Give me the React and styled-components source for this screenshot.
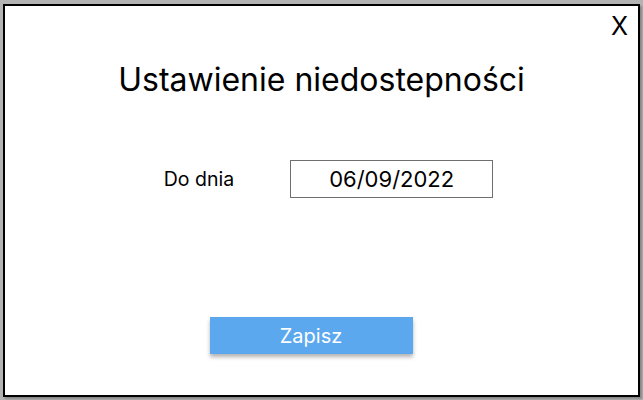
import React, { useState } from 'react';
import styled, { createGlobalStyle } from 'styled-components';

const GlobalStyle = createGlobalStyle`
  html, body {
    margin: 0;
    padding: 0;
    background: #b3b3b3;
    font-family: Inter, "Noto Sans", sans-serif;
  }
`;

const Page = styled.div`
  width: 643px;
  height: 400px;
  padding: 4px 3px 3px 3px;
  box-sizing: border-box;
  display: flex;
`;

const Dialog = styled.div`
  position: relative;
  flex: 1;
  background: #fff;
  border: 2px solid #000;
  box-shadow: 2px 2px 2px rgba(0, 0, 0, 0.25);
  display: flex;
  flex-direction: column;
  align-items: center;
`;

const CloseButton = styled.button`
  position: absolute;
  top: 8px;
  right: 10px;
  border: none;
  background: none;
  padding: 0;
  font-family: Inter, sans-serif;
  font-size: 25px;
  line-height: 1;
  color: #000;
  cursor: pointer;
`;

const Title = styled.h1`
  margin: 55px 0 0;
  font-size: 32px;
  font-weight: 400;
  line-height: 1.2;
  color: #000;
`;

const FieldRow = styled.div`
  display: flex;
  align-items: center;
  gap: 56px;
  margin-top: 61px;
  margin-left: 14px;
`;

const Label = styled.label`
  font-size: 19.5px;
  color: #000;
`;

const DateInput = styled.input`
  width: 203px;
  height: 38px;
  box-sizing: border-box;
  border: 1px solid #6f6f6f;
  border-radius: 0;
  font-family: Inter, sans-serif;
  font-size: 22px;
  text-align: center;
  color: #000;
  outline: none;
`;

const SaveButton = styled.button`
  margin-top: 119px;
  margin-right: 21px;
  width: 203px;
  height: 37px;
  border: none;
  background: #5ba8ef;
  color: #fff;
  font-family: Inter, sans-serif;
  font-size: 20px;
  box-shadow: 0 3px 4px rgba(0, 0, 0, 0.3);
  cursor: pointer;
`;

export default function App() {
  const [date, setDate] = useState('06/09/2022');

  return (
    <>
      <GlobalStyle />
      <Page>
        <Dialog>
          <CloseButton>X</CloseButton>
          <Title>Ustawienie niedostepności</Title>
          <FieldRow>
            <Label htmlFor="until">Do dnia</Label>
            <DateInput id="until" value={date} onChange={(e) => setDate(e.target.value)} />
          </FieldRow>
          <SaveButton>Zapisz</SaveButton>
        </Dialog>
      </Page>
    </>
  );
}
